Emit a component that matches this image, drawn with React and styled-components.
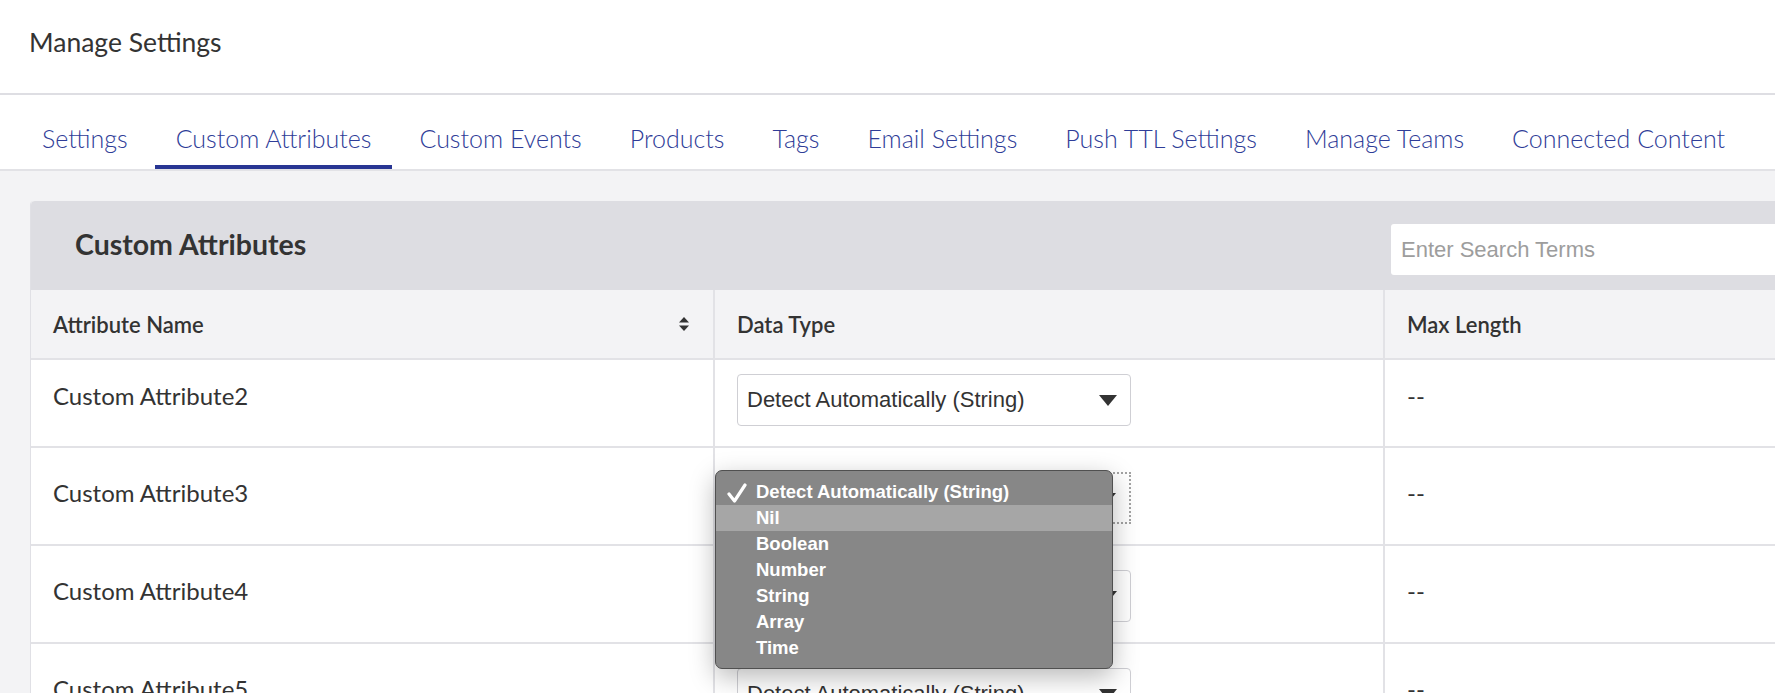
import styled, { createGlobalStyle } from "styled-components";

const GlobalStyle = createGlobalStyle`
    body {
        margin: 0;
        font-family: Lato, "Open Sans", sans-serif;
        background: #f3f3f5;
        color: #333;
    }
`;

const TABS = [
    "Settings",
    "Custom Attributes",
    "Custom Events",
    "Products",
    "Tags",
    "Email Settings",
    "Push TTL Settings",
    "Manage Teams",
    "Connected Content",
];

const ROWS = [
    { name: "Custom Attribute2" },
    { name: "Custom Attribute3", open: true },
    { name: "Custom Attribute4" },
    { name: "Custom Attribute5" },
];

const OPTIONS = ["Detect Automatically (String)", "Nil", "Boolean", "Number", "String", "Array", "Time"];

export default function App() {
    return (
        <Page>
            <GlobalStyle />
            <TopBar>Manage Settings</TopBar>
            <TabBar>
                {TABS.map((tab) => (
                    <Tab key={tab} $active={tab === "Custom Attributes"}>
                        {tab}
                    </Tab>
                ))}
            </TabBar>
            <Content>
                <Panel>
                    <PanelHeader>
                        <PanelTitle>Custom Attributes</PanelTitle>
                        <SearchInput placeholder="Enter Search Terms" />
                    </PanelHeader>
                    <HeaderRow>
                        <HeadCell>
                            Attribute Name
                            <SortIcon width="10" height="14" viewBox="0 0 10 14">
                                <path d="M5 0 L10 5.5 L0 5.5 Z" fill="#333" />
                                <path d="M0 8.5 L10 8.5 L5 14 Z" fill="#333" />
                            </SortIcon>
                        </HeadCell>
                        <HeadCell>Data Type</HeadCell>
                        <HeadCell $last>Max Length</HeadCell>
                    </HeaderRow>
                    {ROWS.map((row, i) => (
                        <Row key={row.name}>
                            <Cell $first={i === 0}>
                                <CellText $first={i === 0}>{row.name}</CellText>
                            </Cell>
                            <Cell $first={i === 0}>
                                <SelectBox $focused={row.open}>
                                    <span>Detect Automatically (String)</span>
                                    <Arrow />
                                    {row.open && (
                                        <Menu>
                                            {OPTIONS.map((opt, j) => (
                                                <MenuItem key={opt} $active={opt === "Nil"}>
                                                    {j === 0 && (
                                                        <Check width="20" height="22" viewBox="0 0 20 22">
                                                            <polyline
                                                                points="2,12 7.5,19 18,3"
                                                                fill="none"
                                                                stroke="#fff"
                                                                strokeWidth="3.2"
                                                                strokeLinecap="round"
                                                                strokeLinejoin="round"
                                                            />
                                                        </Check>
                                                    )}
                                                    {opt}
                                                </MenuItem>
                                            ))}
                                        </Menu>
                                    )}
                                </SelectBox>
                            </Cell>
                            <Cell $first={i === 0} $last>
                                <CellText $first={i === 0}>--</CellText>
                            </Cell>
                        </Row>
                    ))}
                </Panel>
            </Content>
        </Page>
    );
}

const Page = styled.div`
    width: 100vw;
    height: 100vh;
    overflow: hidden;
    display: flex;
    flex-direction: column;
`;

const TopBar = styled.header`
    height: 95px;
    flex-shrink: 0;
    box-sizing: border-box;
    background: #fff;
    border-bottom: 2px solid #dedee3;
    display: flex;
    align-items: center;
    padding: 0 0 10px 29px;
    font-size: 26.5px;
    color: #333;
`;

const TabBar = styled.nav`
    height: 74px;
    flex-shrink: 0;
    background: #fff;
    border-bottom: 2px solid #e2e2e6;
    display: flex;
    gap: 6px;
    padding-left: 21px;
`;

const Tab = styled.div`
    box-sizing: border-box;
    height: 74px;
    display: flex;
    align-items: center;
    padding: 16px 21px 0;
    font-size: 25px;
    font-weight: 300;
    color: #2f3d98;
    white-space: nowrap;
    border-bottom: 4px solid ${(p) => (p.$active ? "#283593" : "transparent")};
    cursor: pointer;
`;

const Content = styled.main`
    flex: 1;
    padding: 30px 0 0 30px;
`;

const Panel = styled.section`
    width: 1900px;
    background: #fff;
    border-left: 1px solid #e0e0e5;
    border-radius: 4px 0 0 0;
`;

const PanelHeader = styled.div`
    height: 89px;
    box-sizing: border-box;
    background: #dddde2;
    border-radius: 4px 0 0 0;
    display: flex;
    align-items: center;
    padding: 0 30px 0 44px;
`;

const PanelTitle = styled.h2`
    flex: 1;
    margin: 0 0 4px;
    font-size: 28.5px;
    font-weight: 700;
    color: #333;
`;

const SearchInput = styled.input`
    width: 510px;
    height: 51px;
    margin-top: 8px;
    box-sizing: border-box;
    border: none;
    border-radius: 3px;
    padding: 0 10px;
    font-family: "Liberation Sans", Arial, sans-serif;
    font-size: 22px;
    color: #333;
    background: #fff;
    &::placeholder {
        color: #9d9d9d;
    }
`;

const HeaderRow = styled.div`
    display: grid;
    grid-template-columns: 684px 670px 1fr;
    height: 70px;
    box-sizing: border-box;
    background: #f3f3f5;
    border-bottom: 2px solid #e2e2e6;
`;

const HeadCell = styled.div`
    box-sizing: border-box;
    display: flex;
    align-items: center;
    justify-content: space-between;
    padding: 0 24px 0 22px;
    font-size: 22px;
    font-weight: 600;
    color: #333;
    border-right: ${(p) => (p.$last ? "none" : "2px solid #e2e2e6")};
`;

const SortIcon = styled.svg`
    display: block;
`;

const Row = styled.div`
    display: grid;
    grid-template-columns: 684px 670px 1fr;
    border-bottom: 2px solid #e2e2e6;
    background: #fff;
`;

const Cell = styled.div`
    box-sizing: border-box;
    padding: ${(p) => (p.$first ? "14px" : "24px")} 22px 20px;
    border-right: ${(p) => (p.$last ? "none" : "2px solid #e2e2e6")};
`;

const CellText = styled.div`
    margin-top: ${(p) => (p.$first ? "8px" : "7px")};
    font-size: 24px;
    line-height: 28px;
    color: #333;
`;

const SelectBox = styled.div`
    position: relative;
    width: 394px;
    height: 52px;
    box-sizing: border-box;
    border: ${(p) => (p.$focused ? "2px dotted #a3a3a3" : "1px solid #cfcfd4")};
    border-radius: ${(p) => (p.$focused ? "0" : "4px")};
    background: #fff;
    display: flex;
    align-items: center;
    justify-content: space-between;
    padding: 0 13px 0 9px;
    font-family: "Liberation Sans", Arial, sans-serif;
    font-size: 22px;
    color: #333;
`;

const Arrow = styled.span`
    width: 0;
    height: 0;
    border-left: 9px solid transparent;
    border-right: 9px solid transparent;
    border-top: 11px solid #333;
`;

const Menu = styled.div`
    position: absolute;
    left: -24px;
    top: -4px;
    z-index: 10;
    width: 398px;
    box-sizing: border-box;
    padding: 8px 0 7px;
    background: #878787;
    border: 1px solid #505050;
    border-radius: 7px;
    box-shadow: 0 8px 26px rgba(0, 0, 0, 0.28);
`;

const MenuItem = styled.div`
    position: relative;
    height: 26px;
    display: flex;
    align-items: center;
    padding-left: 40px;
    background: ${(p) => (p.$active ? "#a6a6a6" : "transparent")};
    font-family: "Liberation Sans", Arial, sans-serif;
    font-weight: 700;
    font-size: 18.5px;
    color: #fff;
`;

const Check = styled.svg`
    position: absolute;
    left: 11px;
    top: 3px;
`;
